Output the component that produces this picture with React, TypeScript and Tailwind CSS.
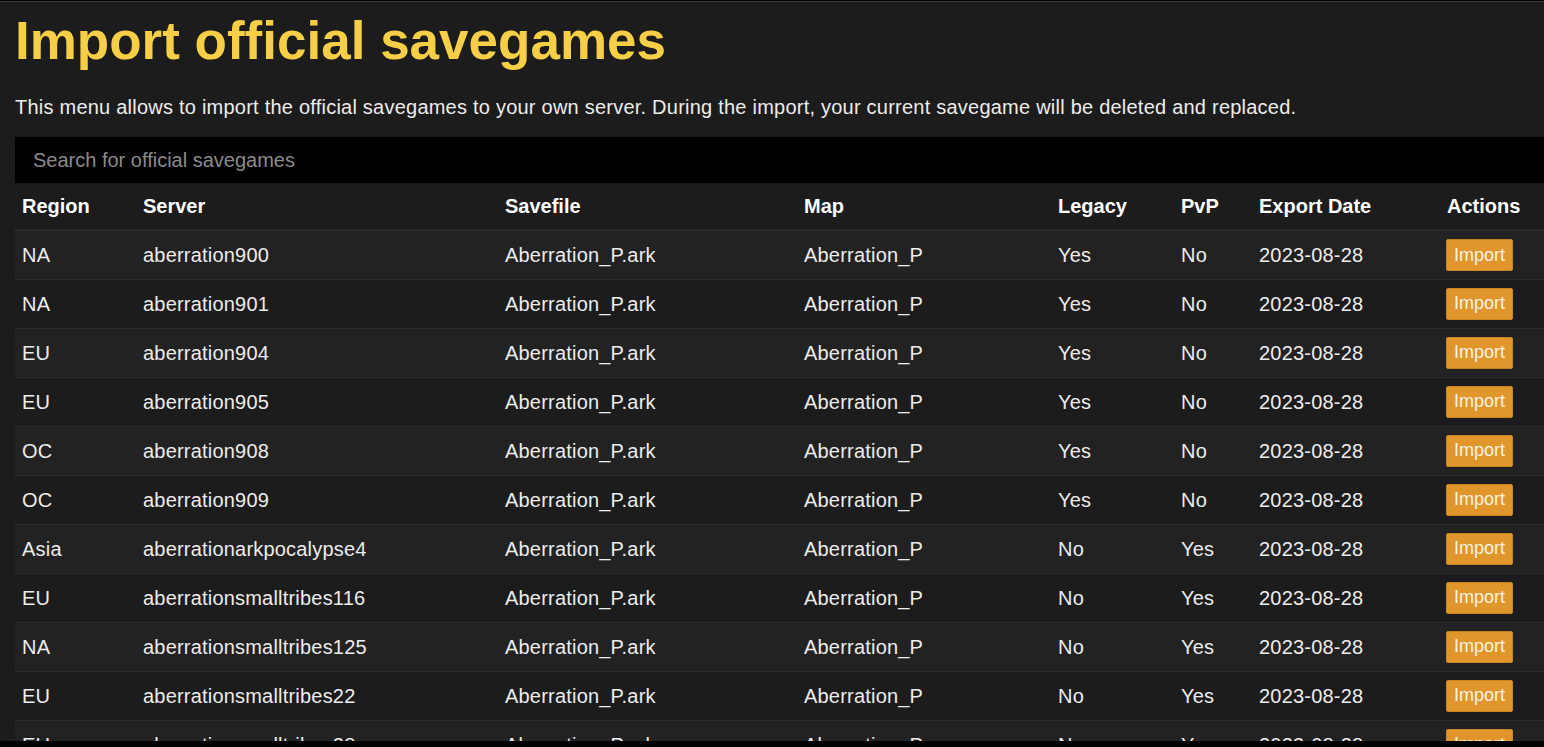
import React from 'react';

type Row = {
  region: string;
  server: string;
  legacy: string;
  pvp: string;
};

const rows: Row[] = [
  { region: 'NA', server: 'aberration900', legacy: 'Yes', pvp: 'No' },
  { region: 'NA', server: 'aberration901', legacy: 'Yes', pvp: 'No' },
  { region: 'EU', server: 'aberration904', legacy: 'Yes', pvp: 'No' },
  { region: 'EU', server: 'aberration905', legacy: 'Yes', pvp: 'No' },
  { region: 'OC', server: 'aberration908', legacy: 'Yes', pvp: 'No' },
  { region: 'OC', server: 'aberration909', legacy: 'Yes', pvp: 'No' },
  { region: 'Asia', server: 'aberrationarkpocalypse4', legacy: 'No', pvp: 'Yes' },
  { region: 'EU', server: 'aberrationsmalltribes116', legacy: 'No', pvp: 'Yes' },
  { region: 'NA', server: 'aberrationsmalltribes125', legacy: 'No', pvp: 'Yes' },
  { region: 'EU', server: 'aberrationsmalltribes22', legacy: 'No', pvp: 'Yes' },
  { region: 'EU', server: 'aberrationsmalltribes28', legacy: 'No', pvp: 'Yes' },
];

export default function App() {
  return (
    <div className="h-[747px] overflow-hidden bg-black pt-px font-['Liberation_Sans',Arial,sans-serif]">
      <div className="h-[740px] overflow-hidden border-t border-[#3a3a3a] bg-[#1c1c1c] pl-[15px]">
        <h1 className="mt-[12px] text-[53px] font-bold leading-none text-[#f6cf47]">
          Import official savegames
        </h1>
        <p className="mt-[28px] text-[20px] leading-6 tracking-[0.23px] text-[#ececec]">
          This menu allows to import the official savegames to your own server. During the import, your current savegame will be deleted and replaced.
        </p>
        <input
          className="mt-[18px] block h-[46px] w-full bg-black px-[18px] text-[20px] text-[#ddd] outline-none placeholder:text-[#8a8a8a]"
          placeholder="Search for official savegames"
        />
        <table className="w-[1560px] table-fixed border-collapse text-left text-[20px] tracking-[0.2px] text-[#ececec]">
          <colgroup>
            <col className="w-[121px]" />
            <col className="w-[362px]" />
            <col className="w-[299px]" />
            <col className="w-[254px]" />
            <col className="w-[123px]" />
            <col className="w-[78px]" />
            <col className="w-[188px]" />
            <col />
          </colgroup>
          <thead>
            <tr className="h-[47px] border-b-2 border-[#2c2c2c]">
              {['Region', 'Server', 'Savefile', 'Map', 'Legacy', 'PvP', 'Export Date', 'Actions'].map((h) => (
                <th key={h} className="px-[7px] font-bold tracking-normal text-white">{h}</th>
              ))}
            </tr>
          </thead>
          <tbody>
            {rows.map((r, i) => (
              <tr
                key={r.server}
                className={`h-[49px] border-b border-[#2c2c2c] ${i % 2 === 0 ? 'bg-[#222222]' : 'bg-[#1c1c1c]'}`}
              >
                <td className="px-[7px]">{r.region}</td>
                <td className="px-[7px]">{r.server}</td>
                <td className="px-[7px]">Aberration_P.ark</td>
                <td className="px-[7px]">Aberration_P</td>
                <td className="px-[7px]">{r.legacy}</td>
                <td className="px-[7px]">{r.pvp}</td>
                <td className="px-[7px]">2023-08-28</td>
                <td className="px-[6px]">
                  <button className="h-[32px] rounded-[2px] border border-[#c98520] bg-[#e0962a] px-[7px] text-[18px] tracking-normal text-[#fdf3e3]">
                    Import
                  </button>
                </td>
              </tr>
            ))}
          </tbody>
        </table>
      </div>
    </div>
  );
}
